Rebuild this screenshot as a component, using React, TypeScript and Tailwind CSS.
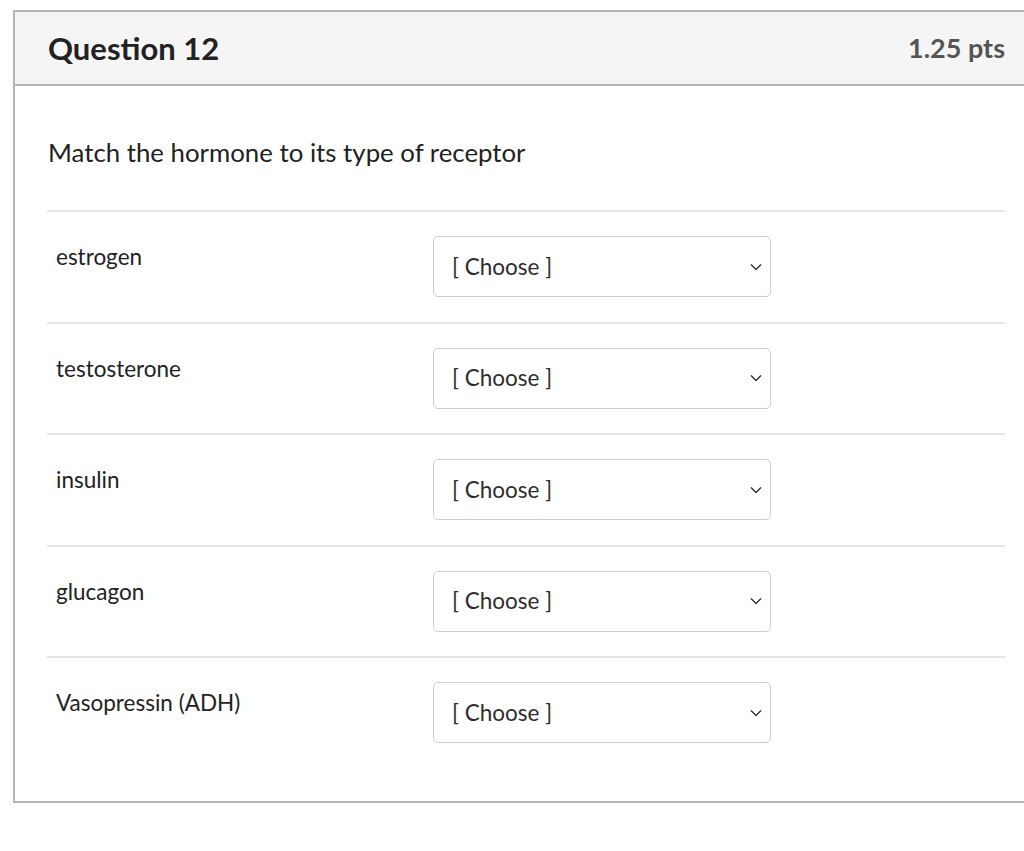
import React from 'react';

const hormones = ['estrogen', 'testosterone', 'insulin', 'glucagon', 'Vasopressin (ADH)'];

const ChooseSelect: React.FC = () => (
  <div className="w-[338px] h-[61px] flex items-center justify-between pl-[18px] pr-[8px] border border-[#c7cdd1] rounded-[5px] bg-white">
    <span className="text-[22.5px] text-[#2d2d2d]">[ Choose ]</span>
    <svg width="12" height="8" viewBox="0 0 12 8" fill="none">
      <path d="M1 1.5l5 5 5-5" stroke="#333" strokeWidth="1.4" />
    </svg>
  </div>
);

export default function App() {
  return (
    <div className="w-[1024px] h-[851px] overflow-hidden bg-white pt-[10px]" style={{ fontFamily: 'Lato, "Liberation Sans", sans-serif' }}>
      <div className="ml-[13px] border-l-2 border-t-2 border-b-2 border-[#b5b5b5]">
        {/* header */}
        <div className="h-[74px] flex items-center justify-between pl-[33px] pr-[19px] bg-[#f5f5f5] border-b-2 border-[#b5b5b5]">
          <h2 className="text-[31px] font-bold text-[#222]">Question 12</h2>
          <div className="text-[27px] font-bold text-[#555]">1.25 pts</div>
        </div>

        {/* body */}
        <div className="pl-[32px] pr-[19px] pt-[48px] pb-[33px]">
          <p className="pl-px text-[25.8px] leading-[36px] text-[#222] mb-[40px]">Match the hormone to its type of receptor</p>
          {hormones.map((h) => (
            <div key={h} className="flex items-start border-t-2 border-[#e6e6e6] pt-[24px] pb-[24.5px]">
              <div className="w-[386px] pl-[9px] pt-[6px] text-[22.5px] leading-[30px] text-[#222]">{h}</div>
              <ChooseSelect />
            </div>
          ))}
        </div>
      </div>
    </div>
  );
}
